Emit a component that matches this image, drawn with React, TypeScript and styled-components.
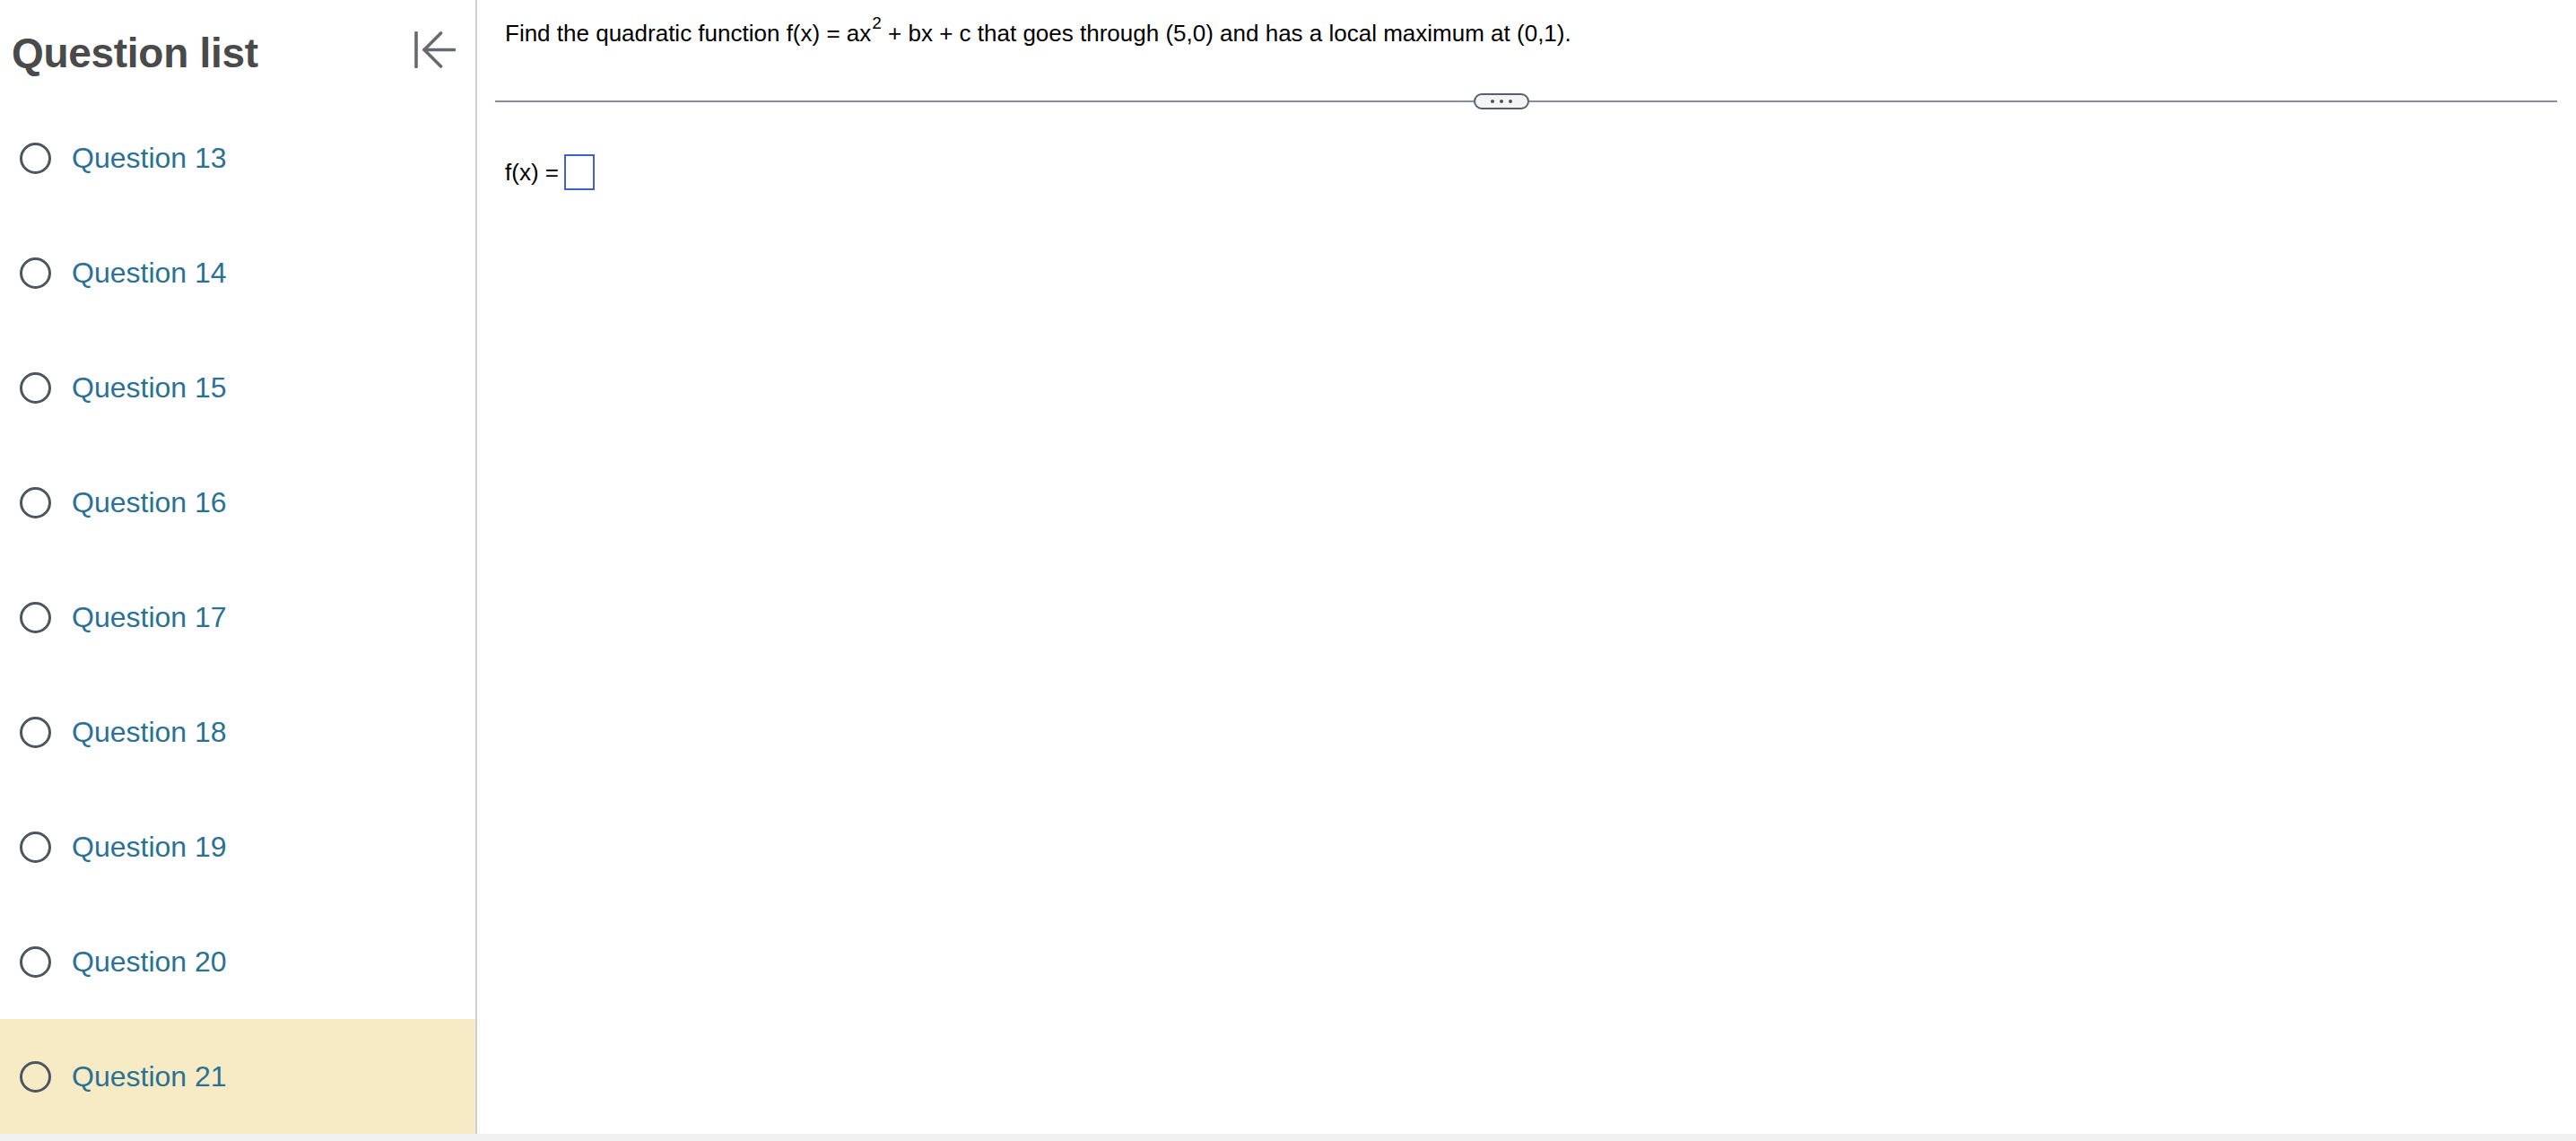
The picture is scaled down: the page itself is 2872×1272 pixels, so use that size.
import React from 'react'
import styled, { createGlobalStyle } from 'styled-components'

const GlobalStyle = createGlobalStyle`
  html, body {
    margin: 0;
    padding: 0;
    background: #ffffff;
  }
  body {
    font-family: 'Liberation Sans', Arial, Helvetica, sans-serif;
  }
`

const questions = [13, 14, 15, 16, 17, 18, 19, 20, 21]
const currentQuestion = 21

const CollapseIcon = () => (
  <svg width="46" height="41" viewBox="0 0 46 41" fill="none">
    <path d="M2 1.5 V39.5" stroke="#656a6c" strokeWidth="3.6" strokeLinecap="round" />
    <path d="M11 20.5 H44.5" stroke="#656a6c" strokeWidth="3.6" strokeLinecap="round" />
    <path d="M29.5 2 L11 20.5 L29.5 39" stroke="#656a6c" strokeWidth="3.6" strokeLinecap="round" strokeLinejoin="round" />
  </svg>
)

const App = () => {
  return (
    <>
      <GlobalStyle />
      <Page>
        <Workspace>
          <Sidebar>
            <SidebarHeader>
              <SidebarTitle>Question list</SidebarTitle>
              <CollapseButton aria-label="Collapse question list">
                <CollapseIcon />
              </CollapseButton>
            </SidebarHeader>
            <QuestionList>
              {questions.map((n) => (
                <QuestionRow key={n} active={n === currentQuestion}>
                  <StatusCircle />
                  <QuestionLink>Question {n}</QuestionLink>
                </QuestionRow>
              ))}
            </QuestionList>
          </Sidebar>
          <Content>
            <Prompt>
              Find the quadratic function f(x) = ax<Sup>2</Sup>&nbsp;+ bx + c that goes through (5,0) and has a
              local maximum at (0,1).
            </Prompt>
            <DividerRow>
              <DividerLine grow={false} />
              <MorePill>
                <Dot />
                <Dot />
                <Dot />
              </MorePill>
              <DividerLine grow />
            </DividerRow>
            <AnswerRow>
              <AnswerLabel>f(x) =</AnswerLabel>
              <AnswerBox />
            </AnswerRow>
          </Content>
        </Workspace>
        <BottomStrip />
      </Page>
    </>
  )
}

export default App

const Page = styled.div`
  width: 2872px;
  height: 1272px;
  display: flex;
  flex-direction: column;
  overflow: hidden;
`

const Workspace = styled.div`
  flex: 1;
  display: flex;
  flex-direction: row;
  min-height: 0;
`

const Sidebar = styled.aside`
  width: 530px;
  flex-shrink: 0;
  border-right: 2px solid #ccd0da;
  display: flex;
  flex-direction: column;
`

const SidebarHeader = styled.div`
  height: 112px;
  display: flex;
  align-items: center;
  justify-content: space-between;
  padding: 0 22px 6px 13px;
  box-sizing: border-box;
`

const SidebarTitle = styled.h1`
  margin: 11px 0 0;
  font-size: 46px;
  font-weight: 700;
  line-height: 1;
  color: #4a4a4a;
  letter-spacing: -0.3px;
`

const CollapseButton = styled.button`
  border: none;
  background: transparent;
  padding: 0;
  display: flex;
  cursor: pointer;
  margin-top: 4px;
`

const QuestionList = styled.ul`
  list-style: none;
  margin: 0;
  padding: 0;
  display: flex;
  flex-direction: column;
`

const QuestionRow = styled.li<{ active?: boolean }>`
  height: 128px;
  display: flex;
  align-items: center;
  gap: 23px;
  padding-left: 22px;
  background: ${(p) => (p.active ? '#f7ebc6' : 'transparent')};
`

const StatusCircle = styled.span`
  width: 35px;
  height: 35px;
  box-sizing: border-box;
  border: 3.2px solid #4b5661;
  border-radius: 50%;
  flex-shrink: 0;
`

const QuestionLink = styled.a`
  font-size: 32px;
  color: #2b7194;
  text-decoration: none;
  line-height: 1;
`

const Content = styled.main`
  flex: 1;
  display: flex;
  flex-direction: column;
  padding: 21px 21px 0 20px;
`

const Prompt = styled.p`
  margin: 0 0 0 11px;
  font-size: 26px;
  line-height: 32px;
  color: #000000;
`

const Sup = styled.sup`
  font-size: 19px;
  line-height: 0;
  vertical-align: 14px;
  margin-left: 1px;
`

const DividerRow = styled.div`
  margin-top: 51px;
  height: 18px;
  display: flex;
  align-items: center;
`

const DividerLine = styled.div<{ grow?: boolean }>`
  height: 2px;
  background: #878e99;
  flex: ${(p) => (p.grow ? '1' : '0 0 1091px')};
`

const MorePill = styled.span`
  width: 62px;
  height: 18px;
  box-sizing: border-box;
  border: 2px solid #56606b;
  border-radius: 9px;
  background: #f3f4f6;
  display: flex;
  align-items: center;
  justify-content: center;
  gap: 6px;
`

const Dot = styled.span`
  width: 4px;
  height: 4px;
  border-radius: 50%;
  background: #505459;
`

const AnswerRow = styled.div`
  margin-top: 50px;
  margin-left: 11px;
  display: flex;
  align-items: center;
  gap: 6px;
`

const AnswerLabel = styled.span`
  font-size: 26px;
  line-height: 32px;
  color: #000000;
`

const AnswerBox = styled.span`
  width: 34px;
  height: 40px;
  box-sizing: border-box;
  border: 2px solid #3a64c8;
  background: #ffffff;
`

const BottomStrip = styled.div`
  height: 8px;
  flex-shrink: 0;
  background: #f1f1f1;
`
